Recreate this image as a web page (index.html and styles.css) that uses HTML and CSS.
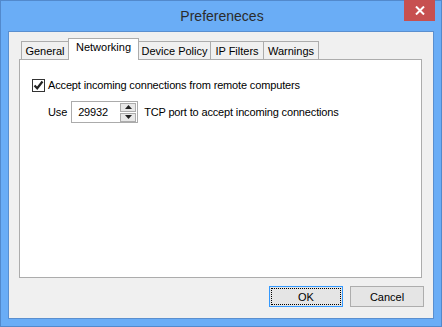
FILE: index.html
```html
<!DOCTYPE html>
<html lang="en">
<head>
  <meta charset="UTF-8" />
  <link rel="stylesheet" href="styles.css">
</head>
<body>

<div class="window">

  <!-- Title bar -->
  <div class="titlebar">
    <div class="title">Prefereneces</div>
    <div class="close-btn">
      <svg width="10" height="9" viewBox="0 0 10 9">
        <path d="M1 0.5 L9 8.5 M9 0.5 L1 8.5" stroke="#fff" stroke-width="2" />
      </svg>
    </div>
  </div>

  <!-- Client area -->
  <div class="client">

    <div class="tabs">
      <div class="tab" style="width: 48px">General</div>
      <div class="tab active" style="width: 71px">Networking</div>
      <div class="tab" style="width: 73px">Device Policy</div>
      <div class="tab" style="width: 54px">IP Filters</div>
      <div class="tab" style="width: 56px">Warnings</div>
    </div>

    <div class="panel">
      <label class="check-row">
        <span class="checkbox">
          <svg width="11" height="11" viewBox="0 0 11 11">
            <path d="M1.5 5.5 L4.2 8.3 L9.5 1.5" fill="none" stroke="#222" stroke-width="2.2" />
          </svg>
        </span>
        Accept incoming connections from remote computers
      </label>

      <div class="port-row">
        <span>Use</span>
        <div class="spinbox">
          <span class="spin-value">29932</span>
          <div class="spin-buttons">
            <div class="spin-btn">
              <svg width="7" height="4" viewBox="0 0 7 4"><path d="M3.5 0 L7 4 L0 4 Z" fill="#222" /></svg>
            </div>
            <div class="spin-btn">
              <svg width="7" height="4" viewBox="0 0 7 4"><path d="M0 0 L7 0 L3.5 4 Z" fill="#222" /></svg>
            </div>
          </div>
        </div>
        <span>TCP port to accept incoming connections</span>
      </div>
    </div>

    <div class="buttons">
      <div class="button default"><span class="focus">OK</span></div>
      <div class="button">Cancel</div>
    </div>

  </div>
</div>

</body>
</html>
```

FILE: styles.css
```css
/* Page setup */
html, body {
  margin: 0;
  padding: 0;
  background: #6aadf6;
}

body {
  font-family: 'Liberation Sans', Arial, sans-serif;
  font-size: 11px;
  color: #000;
}

/* Window frame */
.window {
  width: 442px;
  height: 327px;
  box-sizing: border-box;
  border: 1px solid #5289cc;
  background: #6aadf6;
  display: flex;
  flex-direction: column;
}

.titlebar {
  position: relative;
  height: 30px;
  flex-shrink: 0;
}

.title {
  text-align: center;
  font-size: 14px;
  line-height: 30px;
  color: #2b2b2b;
  padding-left: 2px;
}

.close-btn {
  position: absolute;
  top: -1px;
  right: 6px;
  width: 31px;
  height: 21px;
  background: #c75050;
  display: flex;
  align-items: center;
  justify-content: center;
}

/* Client area */
.client {
  flex: 1;
  margin: 0 7px 7px 7px;
  border: 1px solid #5a8fcf;
  background: #f0f0f0;
  padding: 6px 11px 0 10px;
  display: flex;
  flex-direction: column;
}

/* Tabs */
.tabs {
  display: flex;
  align-items: flex-end;
  padding-left: 2px;
  height: 21px;
  position: relative;
  z-index: 1;
}

.tab {
  box-sizing: border-box;
  height: 18px;
  margin-left: -1px;
  border: 1px solid #acacac;
  border-bottom: none;
  background: #f0f0f0;
  text-align: center;
  line-height: 18px;
  white-space: nowrap;
  color: #000;
}

.tab:first-child {
  margin-left: 0;
}

.tab.active {
  height: 22px;
  margin-bottom: -1px;
  background: #fff;
  line-height: 17px;
  position: relative;
}

.panel {
  box-sizing: border-box;
  height: 219px;
  border: 1px solid #acacac;
  background: #fff;
  padding: 18px 0 0 12px;
  letter-spacing: -0.15px;
}

/* Checkbox row */
.check-row {
  display: flex;
  align-items: center;
  gap: 3px;
  height: 14px;
}

.checkbox {
  box-sizing: border-box;
  width: 13px;
  height: 13px;
  border: 1px solid #333;
  background: #fff;
  display: flex;
  align-items: center;
  justify-content: center;
}

/* Port row */
.port-row {
  display: flex;
  align-items: center;
  margin-top: 9px;
  padding-left: 16px;
  height: 22px;
}

.spinbox {
  box-sizing: border-box;
  width: 67px;
  height: 22px;
  margin: 0 6px 0 4px;
  border: 1px solid #ababab;
  background: #fff;
  display: flex;
  align-items: center;
  justify-content: space-between;
  padding: 0 1px 0 6px;
}

.spin-buttons {
  display: flex;
  flex-direction: column;
  gap: 1px;
}

.spin-btn {
  box-sizing: border-box;
  width: 16px;
  height: 9px;
  border: 1px solid #acacac;
  background: #e8e8e8;
  display: flex;
  align-items: center;
  justify-content: center;
}

/* Dialog buttons */
.buttons {
  display: flex;
  justify-content: flex-end;
  gap: 7px;
  margin: 8px -2px 0 0;
}

.button {
  box-sizing: border-box;
  width: 74px;
  height: 21px;
  border: 1px solid #adadad;
  background: #e5e5e5;
  display: flex;
  align-items: center;
  justify-content: center;
}

.button.default {
  border-color: #3399ff;
  padding: 1px;
}

.focus {
  box-sizing: border-box;
  width: 100%;
  height: 100%;
  border: 1px dotted #000;
  display: flex;
  align-items: center;
  justify-content: center;
}
```
